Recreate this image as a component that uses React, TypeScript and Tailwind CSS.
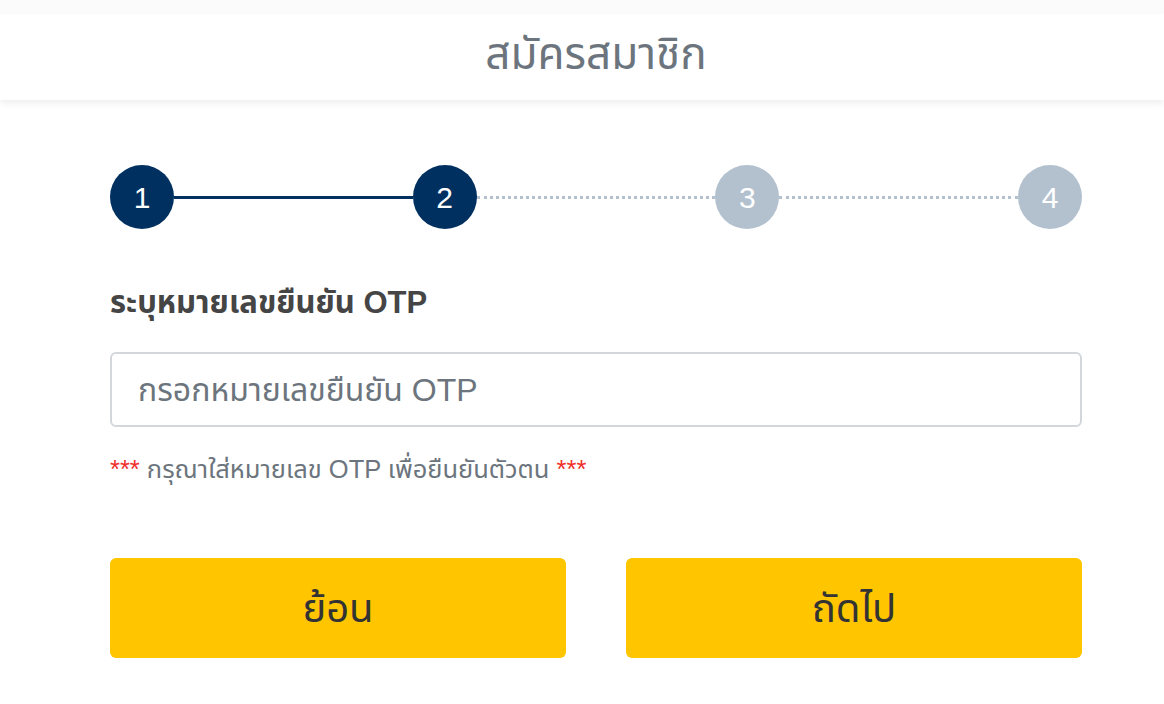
import React from "react";

const font = { fontFamily: '"Liberation Sans", "Noto Sans Thai", "Noto Sans", sans-serif' };

function Step({ n, active }: { n: number; active: boolean }) {
  return (
    <div
      className={`flex h-[64px] w-[64px] shrink-0 items-center justify-center rounded-full text-[30px] text-white ${active ? "bg-[#00305f]" : "bg-[#b3c1cf]"}`}
    >
      {n}
    </div>
  );
}

export default function App() {
  return (
    <div className="min-h-[704px] w-full bg-white" style={font}>
      <div className="h-[14px] bg-[#fbfbfb]" />
      <div className="flex h-[86px] items-center justify-center bg-white pb-[6px] pl-[110px] pr-[82px] shadow-[0_4px_6px_rgba(0,0,0,0.06)]">
        <h1 className="text-[44px] leading-none text-[#6c757d]">สมัครสมาชิก</h1>
      </div>
      <div className="ml-[110px] mr-[82px] pt-[65px]">
        <div className="flex items-center">
          <Step n={1} active />
          <div className="h-[3px] flex-1 bg-[#00305f]" />
          <Step n={2} active />
          <div className="flex-1 border-t-[3px] border-dotted border-[#b3c1cf]" />
          <Step n={3} active={false} />
          <div className="flex-1 border-t-[3px] border-dotted border-[#b3c1cf]" />
          <Step n={4} active={false} />
        </div>
        <div className="mt-[54px] text-[31px] font-bold leading-[40px] text-[#454545]">ระบุหมายเลขยืนยัน OTP</div>
        <div className="mt-[29px] flex h-[75px] items-center rounded-[6px] border-2 border-[#d3d6db] px-[26px]">
          <span className="text-[32px] text-[#6c757d]">กรอกหมายเลขยืนยัน OTP</span>
        </div>
        <div className="mt-[22px] text-[25.5px] leading-[40px] text-[#6c757d]">
          <span className="text-[#f0302c]">***</span> กรุณาใส่หมายเลข OTP เพื่อยืนยันตัวตน{" "}
          <span className="text-[#f0302c]">***</span>
        </div>
        <div className="mt-[69px] grid grid-cols-2 gap-[60px]">
          <button className="flex h-[100px] items-center justify-center rounded-[6px] bg-[#ffc600] text-[40px] text-[#333333]">ย้อน</button>
          <button className="flex h-[100px] items-center justify-center rounded-[6px] bg-[#ffc600] text-[40px] text-[#333333]">ถัดไป</button>
        </div>
      </div>
    </div>
  );
}
